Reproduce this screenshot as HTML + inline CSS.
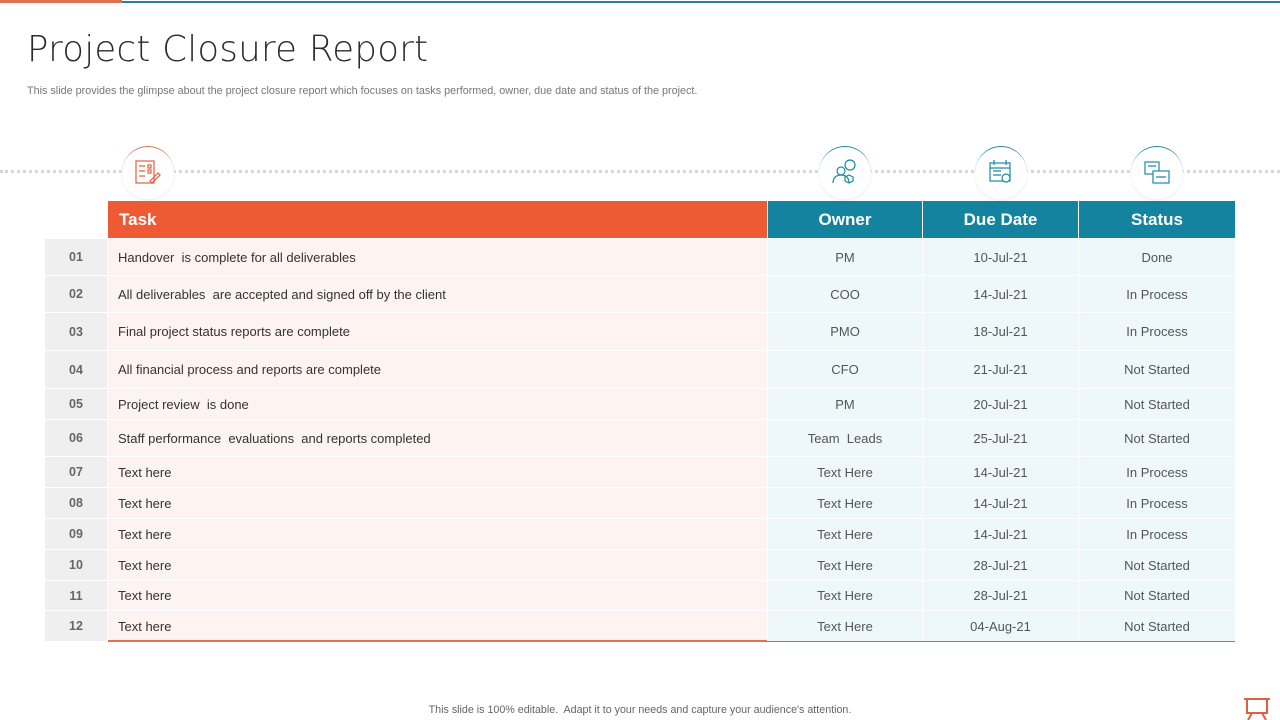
<!DOCTYPE html><html><head><style>
body{margin:0;width:1280px;height:720px;position:relative;background:#fff;font-family:"Liberation Sans",sans-serif;overflow:hidden}
.a{position:absolute}
.row{position:absolute;left:45px;width:1190px;font-size:13px;color:#333}
.row div{position:absolute;top:0;bottom:0;display:flex;align-items:center}
.n{left:0;width:62px;background:#efefef;justify-content:center;font-weight:bold;color:#666;font-size:12.5px}
.t{left:63px;width:659px;background:#fdf4f2;padding-left:10px;box-sizing:border-box}
.o{left:723px;width:154px;background:#eef8fb;justify-content:center;color:#555}
.d{left:878px;width:155px;background:#eef8fb;justify-content:center;color:#555}
.s{left:1034px;width:156px;background:#eef8fb;justify-content:center;color:#555}
.ic{position:absolute;top:146px;width:52px;height:52px;border-radius:50%;border-top:1.5px solid;background:#fff;box-shadow:0 2px 3px #f0f0f0}
</style></head><body>
<div class="a" style="left:0;top:0;width:122px;height:3px;background:#e0714f"></div>
<div class="a" style="left:122px;top:1px;width:1158px;height:2px;background:#2a7f93"></div>
<div class="a" style="left:27px;top:29px;font-size:35.5px;color:#2b2b2b;font-family:'DejaVu Sans',sans-serif;font-weight:300;letter-spacing:0.3px">Project Closure Report</div>
<div class="a" style="left:27px;top:85px;font-size:10.8px;color:#777">This slide provides the glimpse about the project closure report which focuses on tasks performed, owner, due date and status of the project.</div>
<div class="a" style="left:0;top:170px;width:1280px;height:4px;border-top:3px dotted #ccc;opacity:.8"></div>
<div class="ic" style="left:122px;border-color:#d8775a"><svg width="52" height="52"><g fill="none" stroke="#e06040" stroke-width="1.2"><rect x="14" y="14" width="18" height="22"/><path d="M17 19h6M17 24h6M17 29h6M26 18h3v3h-3zM26 23h3v3h-3z M28 34l8-8 2 2-8 8z"/></g></svg></div>
<div class="ic" style="left:819px;border-color:#2a8da8"><svg width="52" height="52"><g fill="none" stroke="#1a8aa8" stroke-width="1.2"><circle cx="31" cy="18" r="5"/><circle cx="22" cy="24" r="4"/><path d="M14 36c0-6 4-8 8-8s8 2 8 8M30 28l4 2v4l-4 2-4-2v-4z"/></g></svg></div>
<div class="ic" style="left:975px;border-color:#2a8da8"><svg width="52" height="52"><g fill="none" stroke="#1a8aa8" stroke-width="1.2"><rect x="15" y="16" width="20" height="18"/><path d="M15 21h20M19 13v5M31 13v5M18 24h8M18 28h8"/><circle cx="31" cy="31" r="4" fill="#fff"/></g></svg></div>
<div class="ic" style="left:1131px;border-color:#2a8da8"><svg width="52" height="52"><g fill="none" stroke="#1a8aa8" stroke-width="1.2"><rect x="14" y="15" width="14" height="12"/><rect x="22" y="24" width="16" height="12" fill="#fff"/><path d="M17 19h8M25 30h10"/></g></svg></div>
<div class="a" style="left:108px;top:201px;width:659px;height:37px;background:#ee5a33;color:#fff;font-weight:bold;font-size:17px;display:flex;align-items:center;padding-left:11px;box-sizing:border-box">Task</div>
<div class="a" style="left:768px;top:201px;width:154px;height:37px;background:#13839f;color:#fff;font-weight:bold;font-size:17px;display:flex;align-items:center;justify-content:center">Owner</div>
<div class="a" style="left:923px;top:201px;width:155px;height:37px;background:#13839f;color:#fff;font-weight:bold;font-size:17px;display:flex;align-items:center;justify-content:center">Due Date</div>
<div class="a" style="left:1079px;top:201px;width:156px;height:37px;background:#13839f;color:#fff;font-weight:bold;font-size:17px;display:flex;align-items:center;justify-content:center">Status</div>
<div class="row" style="top:239px;height:36px"><div class="n">01</div><div class="t">Handover&nbsp; is complete for all deliverables</div><div class="o">PM</div><div class="d">10-Jul-21</div><div class="s">Done</div></div>
<div class="row" style="top:276px;height:36px"><div class="n">02</div><div class="t">All deliverables&nbsp; are accepted and signed off by the client</div><div class="o">COO</div><div class="d">14-Jul-21</div><div class="s">In Process</div></div>
<div class="row" style="top:313px;height:37px"><div class="n">03</div><div class="t">Final project status reports are complete</div><div class="o">PMO</div><div class="d">18-Jul-21</div><div class="s">In Process</div></div>
<div class="row" style="top:351px;height:37px"><div class="n">04</div><div class="t">All financial process and reports are complete</div><div class="o">CFO</div><div class="d">21-Jul-21</div><div class="s">Not Started</div></div>
<div class="row" style="top:389px;height:30px"><div class="n">05</div><div class="t">Project review&nbsp; is done</div><div class="o">PM</div><div class="d">20-Jul-21</div><div class="s">Not Started</div></div>
<div class="row" style="top:420px;height:36px"><div class="n">06</div><div class="t">Staff performance&nbsp; evaluations&nbsp; and reports completed</div><div class="o">Team&nbsp; Leads</div><div class="d">25-Jul-21</div><div class="s">Not Started</div></div>
<div class="row" style="top:457px;height:30px"><div class="n">07</div><div class="t">Text here</div><div class="o">Text Here</div><div class="d">14-Jul-21</div><div class="s">In Process</div></div>
<div class="row" style="top:488px;height:30px"><div class="n">08</div><div class="t">Text here</div><div class="o">Text Here</div><div class="d">14-Jul-21</div><div class="s">In Process</div></div>
<div class="row" style="top:519px;height:30px"><div class="n">09</div><div class="t">Text here</div><div class="o">Text Here</div><div class="d">14-Jul-21</div><div class="s">In Process</div></div>
<div class="row" style="top:550px;height:30px"><div class="n">10</div><div class="t">Text here</div><div class="o">Text Here</div><div class="d">28-Jul-21</div><div class="s">Not Started</div></div>
<div class="row" style="top:581px;height:29px"><div class="n">11</div><div class="t">Text here</div><div class="o">Text Here</div><div class="d">28-Jul-21</div><div class="s">Not Started</div></div>
<div class="row" style="top:611px;height:30px"><div class="n">12</div><div class="t">Text here</div><div class="o">Text Here</div><div class="d">04-Aug-21</div><div class="s">Not Started</div></div>
<div class="a" style="left:108px;top:640px;width:659px;height:2px;background:#e0714f"></div>
<div class="a" style="left:767px;top:641px;width:468px;height:1px;background:#3a9ab0"></div>
<div class="a" style="left:0;top:704px;width:1280px;text-align:center;font-size:10.7px;color:#666">This slide is 100% editable.&nbsp; Adapt it to your needs and capture your audience's attention.</div>
<svg class="a" style="left:1242px;top:697px" width="30" height="23"><g fill="none" stroke="#e0603d" stroke-width="2"><path d="M2 2h26M5 2v14h20V2M10 16l-4 7M20 16l4 7"/></g></svg>
</body></html>
